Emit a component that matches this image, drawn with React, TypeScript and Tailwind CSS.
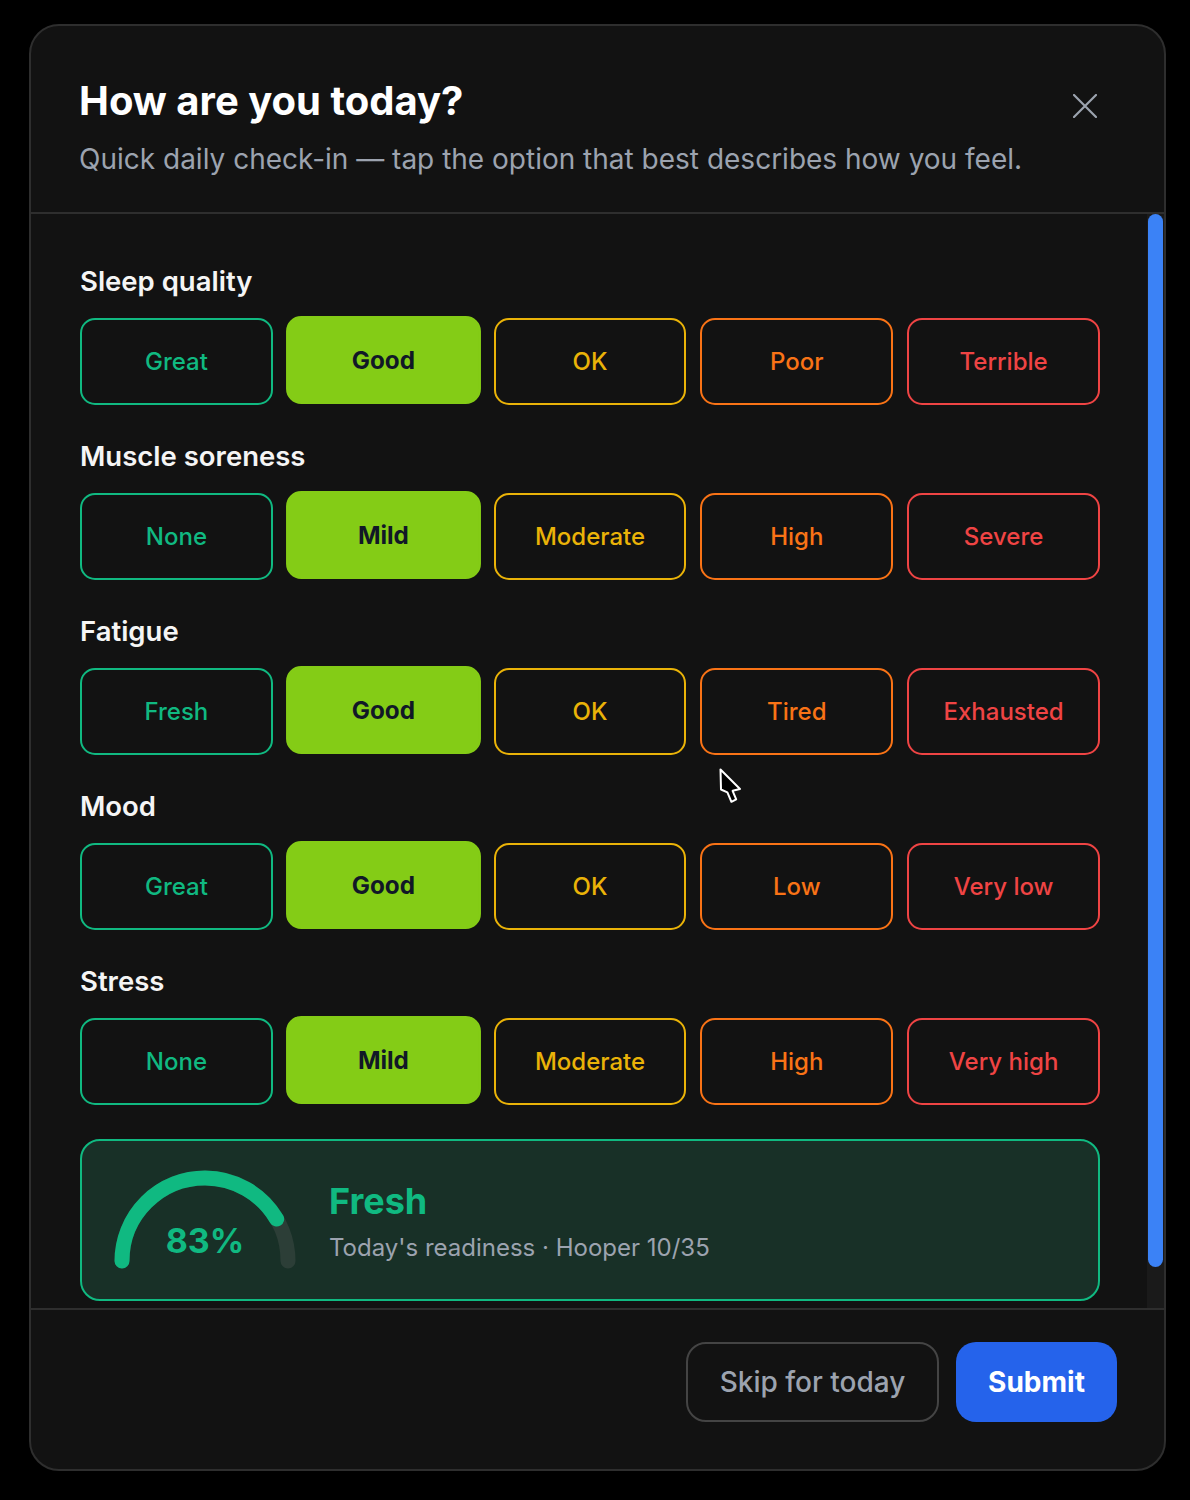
import React from "react";

type Section = { label: string; options: string[]; selected: number };

const sections: Section[] = [
  { label: "Sleep quality", options: ["Great", "Good", "OK", "Poor", "Terrible"], selected: 1 },
  { label: "Muscle soreness", options: ["None", "Mild", "Moderate", "High", "Severe"], selected: 1 },
  { label: "Fatigue", options: ["Fresh", "Good", "OK", "Tired", "Exhausted"], selected: 1 },
  { label: "Mood", options: ["Great", "Good", "OK", "Low", "Very low"], selected: 1 },
  { label: "Stress", options: ["None", "Mild", "Moderate", "High", "Very high"], selected: 1 },
];

// Outline colour per option position (best → worst)
const tones = [
  "border-[#10b981] text-[#10b981]",
  "border-[#84cc16] text-[#84cc16]",
  "border-[#eab308] text-[#eab308]",
  "border-[#f97316] text-[#f97316]",
  "border-[#ef4444] text-[#ef4444]",
];

function OptionButton({ label, tone, active }: { label: string; tone: number; active: boolean }) {
  if (active) {
    return (
      <button className="h-[87px] rounded-[15px] border-2 border-[#84cc16] bg-[#84cc16] text-[24px] font-bold leading-none text-[#111827] scale-[1.01] -translate-y-[1.5px]">
        {label}
      </button>
    );
  }
  return (
    <button className={`h-[87px] rounded-[15px] border-2 bg-transparent text-[24px] font-medium leading-none ${tones[tone]}`}>
      {label}
    </button>
  );
}

function ReadinessGauge({ value }: { value: number }) {
  const len = Math.PI * 83;
  return (
    <div className="relative h-[100px] w-[182px] shrink-0">
      <svg width="182" height="100" viewBox="0 0 182 100" fill="none">
        <path d="M 8 91 A 83 83 0 0 1 174 91" stroke="#2c3e37" strokeWidth="15" strokeLinecap="round" />
        <path
          d="M 8 91 A 83 83 0 0 1 174 91"
          stroke="#10b981"
          strokeWidth="15"
          strokeLinecap="round"
          strokeDasharray={`${(value / 100) * len} ${len}`}
        />
      </svg>
      <span className="absolute left-0 right-0 top-[54px] text-center text-[34px] font-bold leading-[34px] text-[#10b981]">
        {value}%
      </span>
    </div>
  );
}

function Cursor() {
  return (
    <svg
      className="pointer-events-none absolute left-[719px] top-[768px]"
      width="24"
      height="37"
      viewBox="0 0 24 37"
      fill="none"
    >
      <path
        d="M1.5 1.5 L2 21.5 L8.4 24.3 L12.4 33.8 L17.2 31.4 L13.6 22.8 L21 21 Z"
        fill="#000"
        stroke="#fff"
        strokeWidth="2"
        strokeLinejoin="round"
      />
    </svg>
  );
}

export default function App() {
  return (
    <div className="relative h-[1500px] w-[1190px] overflow-hidden bg-black font-['Inter','Noto_Sans',sans-serif]">
      <div className="ml-[29px] mt-[24px] flex h-[1447px] w-[1137px] flex-col overflow-hidden rounded-[30px] border-2 border-[#2e2e2e] bg-[#121212]">
        {/* Header */}
        <div className="flex h-[188px] shrink-0 items-start border-b-2 border-[#2e2e2e] pl-[48px] pr-[59px] pt-[51px]">
          <div className="flex-1">
            <h2 className="text-[40px] font-bold leading-[48px] text-white">How are you today?</h2>
            <p className="mt-4 text-[28px] leading-[36px] text-[#9ca3af]">
              Quick daily check-in — tap the option that best describes how you feel.
            </p>
          </div>
          <button className="mt-[9px] flex h-10 w-10 items-center justify-center text-[#9ca3af]">
            <svg width="24" height="24" viewBox="0 0 24 24" fill="none">
              <path d="M1 1 L23 23 M23 1 L1 23" stroke="currentColor" strokeWidth="2.2" strokeLinecap="round" />
            </svg>
          </button>
        </div>

        {/* Scrollable body */}
        <div className="relative h-[1094px] shrink-0 overflow-hidden">
          <div className="flex w-[1069px] flex-col gap-[33px] pb-12 pl-[49px] pt-[49px]">
            {sections.map((s) => (
              <section key={s.label}>
                <h3 className="mb-[19px] text-[27.5px] font-semibold leading-[36px] text-[#f5f5f5]">{s.label}</h3>
                <div className="grid w-[1020px] grid-cols-5 gap-[14px]">
                  {s.options.map((o, i) => (
                    <OptionButton key={o + i} label={o} tone={i} active={i === s.selected} />
                  ))}
                </div>
              </section>
            ))}
            <div className="mt-px flex h-[162px] w-[1020px] items-center gap-[33px] rounded-[20px] border-2 border-[#10b981] bg-[#183027] pl-[32px]">
              <ReadinessGauge value={83} />
              <div className="mt-[4px] flex flex-col gap-[11px]">
                <span className="text-[36px] font-bold leading-[40px] text-[#10b981]">Fresh</span>
                <span className="text-[24px] leading-[32px] text-[#9ca3af]">Today's readiness · Hooper 10/35</span>
              </div>
            </div>
          </div>
          {/* Scrollbar */}
          <div className="absolute bottom-0 right-0 top-0 w-[17px] bg-[#1a1a1a]">
            <div className="ml-px h-[1053px] w-[15px] rounded-full bg-[#3b82f6]" />
          </div>
        </div>

        {/* Footer */}
        <div className="flex flex-1 items-start justify-end gap-[17px] border-t-2 border-[#2e2e2e] pr-[47px] pt-[32px]">
          <button className="h-[80px] w-[253px] rounded-[20px] border-2 border-[#444444] text-[28px] font-medium text-[#9ca3af]">
            Skip for today
          </button>
          <button className="h-[80px] w-[161px] rounded-[20px] bg-[#2563eb] text-[28px] font-bold text-white">
            Submit
          </button>
        </div>
      </div>
      <Cursor />
    </div>
  );
}
